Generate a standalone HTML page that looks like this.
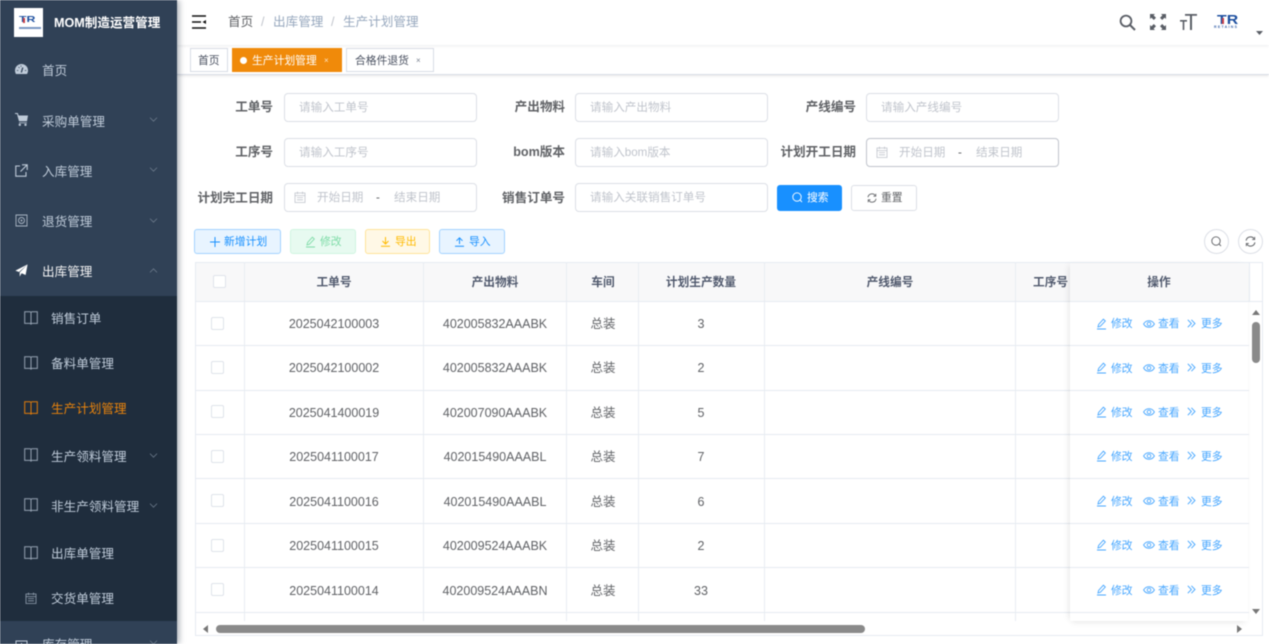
<!DOCTYPE html>
<html lang="zh-CN"><head><meta charset="utf-8"><title>生产计划管理</title>
<style>
*{box-sizing:border-box}
html,body{margin:0;padding:0;width:1269px;height:644px;overflow:hidden;background:#fff}
body{font-family:"Liberation Sans","Noto Sans CJK SC",sans-serif;color:#606266}
#root{position:relative;width:1269px;height:644px;overflow:hidden;filter:blur(.4px)}
#root div,#root span.a,#root svg.a{position:absolute}
.t{white-space:nowrap;line-height:16px;height:16px}
.c{transform:translateX(-50%);text-align:center}
.r{text-align:right}
#side{left:0;top:0;width:177px;height:644px;background:#304156;box-shadow:2px 0 6px rgba(0,21,41,.35);z-index:5;overflow:hidden}
.m{color:#bfcbd9;font-size:12.6px;left:42px}
.s{color:#bfcbd9;font-size:12.6px;left:51px}
.lab{font-size:12.6px;font-weight:700;color:#606266;width:100px;text-align:right}
.inp{height:29px;width:193px;border:1px solid #dcdfe6;border-radius:4px;background:#fff}
.ph{font-size:11.6px;color:#c0c4cc;left:14px;top:6px}
.btn{height:25px;top:229px;border:1px solid;border-radius:3px;font-size:10.8px}
.btn span{position:absolute;top:4px;white-space:nowrap;line-height:16px}
.th{font-size:11.7px;font-weight:700;color:#515a6e;top:275px}
.td{font-size:12.5px;color:#606266}
.hl{height:1px;background:#e6ebf2;left:195px;width:1054px}
.vl{width:1px;background:#e8edf3;top:262px;height:359px}
.op{color:#46a6ff;font-size:10.8px}
.cb{width:13px;height:13px;border:1px solid #dfe3ea;border-radius:2px;background:#fff;left:211px}
.ch{left:149px;color:#6f7d8e}
svg{display:block;overflow:visible}
</style></head><body>
<svg width="0" height="0" style="position:absolute"><defs>
<symbol id="book" viewBox="0 0 14 14"><path d="M.7 .8h5.500l.8.7.8-.7h5.500v11.600H7.800l-.8.8-.8-.8H.7zM7 1.500v11.700" fill="none" stroke="currentColor" stroke-width="1"/></symbol>
<symbol id="chev" viewBox="0 0 10 6"><path d="M.8 .8 5 5 9.200 .8" fill="none" stroke="currentColor" stroke-width=".9"/></symbol>
<symbol id="chevu" viewBox="0 0 10 6"><path d="M.8 5.200 5 1l4.200 4.200" fill="none" stroke="currentColor" stroke-width=".9"/></symbol>
<symbol id="pen" viewBox="0 0 11 12"><path d="M2 9 2.600 6.500 7.400 1.200 9.300 3 4.400 8.200zM1 11h9" fill="none" stroke="currentColor" stroke-width=".9"/></symbol>
<symbol id="eye" viewBox="0 0 12 8"><path d="M.6 4C2 1.600 4 .7 6 .7S10 1.600 11.400 4C10 6.400 8 7.300 6 7.300S2 6.400 .6 4z" fill="none" stroke="currentColor" stroke-width=".9"/><circle cx="6" cy="4" r="1.800" fill="none" stroke="currentColor" stroke-width=".9"/></symbol>
<symbol id="dbl" viewBox="0 0 9 9"><path d="M.8 .8 4.400 4.500.8 8.200M4.400 .8 8 4.500 4.400 8.200" fill="none" stroke="currentColor" stroke-width=".9"/></symbol>
<symbol id="cal" viewBox="0 0 12 12"><path d="M1 2h10v9.500H1zM1 4.600h10M3.500 .6V3M8.500 .6V3M3 6.600h6M3 8.800h6" fill="none" stroke="currentColor" stroke-width=".8"/></symbol>
<symbol id="ref" viewBox="0 0 10 10"><path d="M1 4.200A4 4 0 0 1 8.300 2.600M9 5.800A4 4 0 0 1 1.700 7.400" fill="none" stroke="currentColor" stroke-width=".9"/><path d="M8.800 .8v2.400H6.500M1.200 9.200V6.800h2.300" fill="none" stroke="currentColor" stroke-width=".8"/></symbol>
<symbol id="srch" viewBox="0 0 11 11"><circle cx="5" cy="5" r="4.200" fill="none" stroke="currentColor" stroke-width=".9"/><path d="M8 8l2 2" stroke="currentColor" stroke-width=".9"/></symbol>
</defs></svg>
<div id="root">

<div id="side">
<div style="left:14px;top:8px;width:29px;height:29px;background:#fff"></div>
<div class="t" style="left:19px;top:14px;width:12px;height:10px;font:700 8.500px/10px 'Liberation Sans',sans-serif;color:#1d4f9f;transform-origin:0 50%;transform:scaleX(1.450)">TR</div>
<div style="left:23px;top:18px;width:2px;height:5px;background:#c9414a"></div>
<div style="left:19px;top:27px;width:22px;height:2px;background:#7a97c4"></div>
<div class="t" style="left:54px;top:15px;font-size:12.6px;font-weight:700;color:#fff">MOM制造运营管理</div>

<svg class="a" style="left:15px;top:64px" width="13" height="10" viewBox="0 0 13 10"><path d="M6.500 0A6.500 6.500 0 0 0 0 6.500C0 7.800.4 9 1 10h11c.6-1 1-2.200 1-3.500A6.500 6.500 0 0 0 6.500 0z" fill="#bfcbd9"/><path d="M6.300 8.500 7.800 3.500" stroke="#304156" stroke-width="1.300"/><path d="M1.800 6.500h1.500M9.800 6.500h1.500M3.500 3l1 1M6 1.500v1.200" stroke="#304156" stroke-width=".8"/></svg>
<div class="t m" style="top:63px">首页</div>

<svg class="a" style="left:15px;top:113px" width="13" height="13" viewBox="0 0 13 13"><path d="M0 .5h2.400l1 3" fill="none" stroke="#bfcbd9" stroke-width="1.100"/><path d="M2.400 2.500H13l-1 5.800H4z" fill="#bfcbd9"/><path d="M4 9.800h8" stroke="#bfcbd9" stroke-width=".8"/><circle cx="4.800" cy="11.800" r="1.200" fill="#bfcbd9"/><circle cx="10.500" cy="11.800" r="1.200" fill="#bfcbd9"/></svg>
<div class="t m" style="top:114px">采购单管理</div>
<svg class="a ch" style="top:117px" width="9" height="5"><use href="#chev"/></svg>

<svg class="a" style="left:15px;top:164px" width="13" height="13" viewBox="0 0 13 13"><path d="M5 2H.8v10.200H11V8M7 .8h5.200V6M12 1 5.500 7.500" fill="none" stroke="#bfcbd9" stroke-width="1.100"/></svg>
<div class="t m" style="top:164px">入库管理</div>
<svg class="a ch" style="top:167px" width="9" height="5"><use href="#chev"/></svg>

<svg class="a" style="left:15px;top:214px" width="13" height="13" viewBox="0 0 13 13"><path d="M1 1h11v11H1z" fill="none" stroke="#a8b4c2" stroke-width=".9"/><circle cx="6.500" cy="6.500" r="3" fill="none" stroke="#a8b4c2" stroke-width=".9"/><circle cx="6.500" cy="6.500" r="1" fill="#a8b4c2"/></svg>
<div class="t m" style="top:214px">退货管理</div>
<svg class="a ch" style="top:218px" width="9" height="5"><use href="#chev"/></svg>

<svg class="a" style="left:15px;top:264px" width="13" height="13" viewBox="0 0 13 13"><path d="M12.600 .4 10.600 11 6.600 9.200 4.700 12.600V8.400zM.4 6.600 12.600 .4 4 8z" fill="#fff"/></svg>
<div class="t m" style="top:264px;color:#f4f4f5">出库管理</div>
<svg class="a ch" style="top:268px" width="9" height="5"><use href="#chevu"/></svg>

<div style="left:0;top:296px;width:177px;height:325px;background:#1f2d3d"></div>
<svg class="a" style="left:24px;top:311px;color:#95a2b2" width="14" height="14"><use href="#book"/></svg>
<div class="t s" style="top:311px">销售订单</div>
<svg class="a" style="left:24px;top:356px;color:#95a2b2" width="14" height="14"><use href="#book"/></svg>
<div class="t s" style="top:356px">备料单管理</div>
<svg class="a" style="left:24px;top:401px;color:#e07c0c" width="14" height="14"><use href="#book"/></svg>
<div class="t s" style="top:401px;color:#e8830c">生产计划管理</div>
<svg class="a" style="left:24px;top:448px;color:#95a2b2" width="14" height="14"><use href="#book"/></svg>
<div class="t s" style="top:449px">生产领料管理</div>
<svg class="a ch" style="top:453px" width="9" height="5"><use href="#chev"/></svg>
<svg class="a" style="left:24px;top:498px;color:#95a2b2" width="14" height="14"><use href="#book"/></svg>
<div class="t s" style="top:499px">非生产领料管理</div>
<svg class="a ch" style="top:503px" width="9" height="5"><use href="#chev"/></svg>
<svg class="a" style="left:24px;top:546px;color:#95a2b2" width="14" height="14"><use href="#book"/></svg>
<div class="t s" style="top:546px">出库单管理</div>
<svg class="a" style="left:25px;top:592px;color:#95a2b2" width="12" height="12"><use href="#cal"/></svg>
<div class="t s" style="top:591px">交货单管理</div>
<svg class="a" style="left:15px;top:640px" width="13" height="13" viewBox="0 0 13 13"><path d="M1 1h11v11H1zM6.500 3v5" fill="none" stroke="#bfcbd9"/></svg>
<div class="t m" style="top:637px">库存管理</div>
<svg class="a ch" style="top:640px" width="9" height="5"><use href="#chev"/></svg>
</div>

<!-- top bar -->
<div style="left:177px;top:0;width:1092px;height:45px;background:#fff;box-shadow:0 1px 3px rgba(0,21,41,.08);z-index:2"></div>
<svg class="a" style="left:192px;top:15px;z-index:3" width="14" height="14" viewBox="0 0 14 14"><path d="M0 1h14M0 7h9M0 13h14" stroke="#111" stroke-width="1.400"/><path d="M14 5v4L10.500 7z" fill="#111"/></svg>
<div class="t" style="left:228px;top:14px;font-size:12.6px;color:#606266;z-index:3">首页</div>
<div class="t" style="left:261px;top:14px;font-size:12.6px;color:#c0c4cc;z-index:3">/</div>
<div class="t" style="left:273px;top:14px;font-size:12.6px;color:#97a8be;z-index:3">出库管理</div>
<div class="t" style="left:331px;top:14px;font-size:12.6px;color:#c0c4cc;z-index:3">/</div>
<div class="t" style="left:343px;top:14px;font-size:12.6px;color:#97a8be;z-index:3">生产计划管理</div>
<svg class="a" style="left:1119px;top:14px;z-index:3" width="17" height="17" viewBox="0 0 17 17"><circle cx="7" cy="7" r="5.400" fill="none" stroke="#5a5e66" stroke-width="1.800"/><path d="M11 11l5 5" stroke="#5a5e66" stroke-width="2"/></svg>
<svg class="a" style="left:1150px;top:14px;z-index:3" width="16" height="16" viewBox="0 0 16 16"><g fill="#5a5e66"><path d="M0 0h5L3.600 1.400 6 3.800 3.800 6 1.400 3.600 0 5zM16 0v5L14.600 3.600 12.200 6 10 3.800 12.400 1.400 11 0zM0 16v-5l1.400 1.400L3.800 10 6 12.200 3.600 14.600 5 16zM16 16h-5l1.400-1.400L10 12.200 12.200 10 14.600 12.400 16 11z"/></g></svg>
<svg class="a" style="left:1180px;top:14px;z-index:3" width="17" height="16" viewBox="0 0 17 16"><path d="M5 0h12v1.800h-5V16h-2V1.800H5zM0 6h7v1.600H4.300V16H2.700V7.600H0z" fill="#5a5e66"/></svg>
<div class="t" style="left:1217px;top:14px;width:18px;height:11px;font:700 13px/11px 'Liberation Sans',sans-serif;color:#1d4f9f;z-index:3;transform-origin:0 50%;transform:scaleX(1.220)">TR</div>
<div style="left:1222px;top:18px;width:2px;height:6px;background:#c9414a;z-index:3"></div>
<div class="t" style="left:1214px;top:26px;width:30px;height:3px;font:700 3.500px/3px 'Liberation Sans',sans-serif;color:#3f68ad;letter-spacing:1.300px;z-index:3">RETAINS</div>
<svg class="a" style="left:1256px;top:31px;z-index:3" width="7" height="4"><path d="M0 0h7L3.500 4z" fill="#5a5e66"/></svg>

<!-- tabs -->
<div style="left:177px;top:45px;width:1092px;height:30px;background:#fff;border-bottom:1px solid #d8dce5;box-shadow:0 1px 3px rgba(0,0,0,.1)"></div>
<div style="left:190px;top:48px;width:38px;height:24px;border:1px solid #d8dce5;background:#fff"></div>
<div class="t" style="left:198px;top:53px;font-size:10.8px;color:#495060">首页</div>
<div style="left:232px;top:48px;width:110px;height:24px;background:#f08a0a"></div>
<div style="left:240px;top:57px;width:7px;height:7px;border-radius:50%;background:#fff"></div>
<div class="t" style="left:252px;top:53px;font-size:10.8px;color:#fff">生产计划管理</div>
<div class="t" style="left:324px;top:53px;font-size:8px;color:#fde2c0">×</div>
<div style="left:346px;top:48px;width:88px;height:24px;border:1px solid #d8dce5;background:#fff"></div>
<div class="t" style="left:355px;top:53px;font-size:10.8px;color:#495060">合格件退货</div>
<div class="t" style="left:416px;top:53px;font-size:8px;color:#7a8290">×</div>

<!-- form -->
<div class="t lab" style="left:173px;top:99px">工单号</div>
<div class="inp" style="left:284px;top:93px"><span class="a t ph">请输入工单号</span></div>
<div class="t lab" style="left:465px;top:99px">产出物料</div>
<div class="inp" style="left:575px;top:93px"><span class="a t ph">请输入产出物料</span></div>
<div class="t lab" style="left:756px;top:99px">产线编号</div>
<div class="inp" style="left:866px;top:93px"><span class="a t ph">请输入产线编号</span></div>

<div class="t lab" style="left:173px;top:144px">工序号</div>
<div class="inp" style="left:284px;top:138px"><span class="a t ph">请输入工序号</span></div>
<div class="t lab" style="left:465px;top:144px">bom版本</div>
<div class="inp" style="left:575px;top:138px"><span class="a t ph">请输入bom版本</span></div>
<div class="t lab" style="left:756px;top:144px">计划开工日期</div>
<div class="inp" style="left:866px;top:138px;border-color:#c0c4cc"><svg class="a" style="left:9px;top:7px;color:#c0c4cc" width="12" height="12"><use href="#cal"/></svg><span class="a t ph" style="left:32px">开始日期</span><span class="a t ph" style="left:91px;color:#606266">-</span><span class="a t ph" style="left:109px">结束日期</span></div>

<div class="t lab" style="left:173px;top:190px">计划完工日期</div>
<div class="inp" style="left:284px;top:183px"><svg class="a" style="left:9px;top:7px;color:#c0c4cc" width="12" height="12"><use href="#cal"/></svg><span class="a t ph" style="left:32px">开始日期</span><span class="a t ph" style="left:91px;color:#606266">-</span><span class="a t ph" style="left:109px">结束日期</span></div>
<div class="t lab" style="left:465px;top:190px">销售订单号</div>
<div class="inp" style="left:575px;top:183px"><span class="a t ph">请输入关联销售订单号</span></div>
<div style="left:777px;top:185px;width:65px;height:26px;background:#1890ff;border-radius:3px"></div>
<svg class="a" style="left:792px;top:192px;color:#fff" width="11" height="11"><use href="#srch"/></svg>
<div class="t" style="left:807px;top:190px;font-size:10.8px;color:#fff">搜索</div>
<div style="left:851px;top:185px;width:66px;height:26px;border:1px solid #dcdfe6;border-radius:3px;background:#fff"></div>
<svg class="a" style="left:867px;top:193px;color:#606266" width="10" height="10"><use href="#ref"/></svg>
<div class="t" style="left:881px;top:190px;font-size:10.8px;color:#606266">重置</div>

<!-- toolbar -->
<div class="btn" style="left:194px;width:87px;background:#e8f4ff;border-color:#a3d3ff;color:#1890ff"><svg class="a" style="left:15px;top:7px" width="10" height="10" viewBox="0 0 10 10"><path d="M5 0v10M0 5h10" stroke="#1890ff" stroke-width="1"/></svg><span style="left:29px">新增计划</span></div>
<div class="btn" style="left:290px;width:66px;background:#e7faf0;border-color:#d0f5e0;color:#7fdca8"><svg class="a" style="left:14px;top:6px;color:#7fdca8" width="11" height="12"><use href="#pen"/></svg><span style="left:29px">修改</span></div>
<div class="btn" style="left:365px;width:65px;background:#fff8e6;border-color:#ffe399;color:#ffba00"><svg class="a" style="left:15px;top:7px" width="9" height="10" viewBox="0 0 9 10"><path d="M4.500 0v6.500M1.500 4l3 3 3-3M0 9.300h9" fill="none" stroke="#ffba00" stroke-width="1"/></svg><span style="left:29px">导出</span></div>
<div class="btn" style="left:439px;width:66px;background:#e8f4ff;border-color:#a3d3ff;color:#1890ff"><svg class="a" style="left:15px;top:7px" width="9" height="10" viewBox="0 0 9 10"><path d="M4.500 7V.8M1.500 3.800l3-3 3 3M0 9.300h9" fill="none" stroke="#1890ff" stroke-width="1"/></svg><span style="left:29px">导入</span></div>
<div style="left:1204px;top:229px;width:25px;height:25px;border:1px solid #dcdfe6;border-radius:50%;background:#fff"></div>
<svg class="a" style="left:1211px;top:236px;color:#606266" width="11" height="11"><use href="#srch"/></svg>
<div style="left:1238px;top:229px;width:25px;height:25px;border:1px solid #dcdfe6;border-radius:50%;background:#fff"></div>
<svg class="a" style="left:1245px;top:236px;color:#606266" width="11" height="11"><use href="#ref"/></svg>

<!-- table -->
<div style="left:195px;top:262px;width:1068px;height:374px;border:1px solid #e6ebf2;background:#fff"></div>
<div style="left:196px;top:263px;width:1053px;height:38px;background:#f8f8f9"></div>
<div class="vl" style="left:244px"></div><div class="vl" style="left:423px"></div><div class="vl" style="left:566px"></div><div class="vl" style="left:638px"></div><div class="vl" style="left:764px"></div><div class="vl" style="left:1015px"></div>
<div class="hl" style="top:301px;width:1068px"></div>
<div class="hl" style="top:345px"></div><div class="hl" style="top:390px"></div><div class="hl" style="top:434px"></div><div class="hl" style="top:478px"></div><div class="hl" style="top:523px"></div><div class="hl" style="top:567px"></div><div class="hl" style="top:612px"></div>
<div class="cb" style="left:213px;top:275px"></div>
<div class="t th c" style="left:334px">工单号</div>
<div class="t th c" style="left:495px">产出物料</div>
<div class="t th c" style="left:603px">车间</div>
<div class="t th c" style="left:701px">计划生产数量</div>
<div class="t th c" style="left:890px">产线编号</div>
<div class="t th" style="left:1033px">工序号</div>

<div class="cb" style="top:317px"></div><div class="t td c" style="left:334px;top:316px">2025042100003</div><div class="t td c" style="left:495px;top:316px">402005832AAABK</div><div class="t td c" style="left:603px;top:316px">总装</div><div class="t td c" style="left:701px;top:316px">3</div>
<div class="cb" style="top:361px"></div><div class="t td c" style="left:334px;top:360px">2025042100002</div><div class="t td c" style="left:495px;top:360px">402005832AAABK</div><div class="t td c" style="left:603px;top:360px">总装</div><div class="t td c" style="left:701px;top:360px">2</div>
<div class="cb" style="top:405px"></div><div class="t td c" style="left:334px;top:405px">2025041400019</div><div class="t td c" style="left:495px;top:405px">402007090AAABK</div><div class="t td c" style="left:603px;top:405px">总装</div><div class="t td c" style="left:701px;top:405px">5</div>
<div class="cb" style="top:450px"></div><div class="t td c" style="left:334px;top:449px">2025041100017</div><div class="t td c" style="left:495px;top:449px">402015490AAABL</div><div class="t td c" style="left:603px;top:449px">总装</div><div class="t td c" style="left:701px;top:449px">7</div>
<div class="cb" style="top:494px"></div><div class="t td c" style="left:334px;top:494px">2025041100016</div><div class="t td c" style="left:495px;top:494px">402015490AAABL</div><div class="t td c" style="left:603px;top:494px">总装</div><div class="t td c" style="left:701px;top:494px">6</div>
<div class="cb" style="top:539px"></div><div class="t td c" style="left:334px;top:538px">2025041100015</div><div class="t td c" style="left:495px;top:538px">402009524AAABK</div><div class="t td c" style="left:603px;top:538px">总装</div><div class="t td c" style="left:701px;top:538px">2</div>
<div class="cb" style="top:583px"></div><div class="t td c" style="left:334px;top:583px">2025041100014</div><div class="t td c" style="left:495px;top:583px">402009524AAABN</div><div class="t td c" style="left:603px;top:583px">总装</div><div class="t td c" style="left:701px;top:583px">33</div>

<!-- fixed column -->
<div style="left:1070px;top:263px;width:178px;height:358px;background:#fff;box-shadow:-4px 0 6px -2px rgba(0,0,0,.07),0 4px 6px -2px rgba(0,0,0,.07)"></div>
<div style="left:1070px;top:263px;width:178px;height:38px;background:#f8f8f9"></div>
<div class="t th c" style="left:1159px">操作</div>
<div class="hl" style="top:301px;left:1070px;width:178px"></div>
<div class="hl" style="top:345px;left:1070px;width:178px"></div><div class="hl" style="top:390px;left:1070px;width:178px"></div><div class="hl" style="top:434px;left:1070px;width:178px"></div><div class="hl" style="top:478px;left:1070px;width:178px"></div><div class="hl" style="top:523px;left:1070px;width:178px"></div><div class="hl" style="top:567px;left:1070px;width:178px"></div><div class="hl" style="top:612px;left:1070px;width:178px"></div>

<div style="left:1096px;top:317px;width:130px;height:14px"><svg class="a op" style="left:0;top:1px" width="11" height="12"><use href="#pen"/></svg><span class="a t op" style="left:15px;top:-1px">修改</span><svg class="a op" style="left:47px;top:3px" width="12" height="8"><use href="#eye"/></svg><span class="a t op" style="left:62px;top:-1px">查看</span><svg class="a op" style="left:91px;top:2px" width="9" height="9"><use href="#dbl"/></svg><span class="a t op" style="left:105px;top:-1px">更多</span></div>
<div style="left:1096px;top:362px;width:130px;height:14px"><svg class="a op" style="left:0;top:0" width="11" height="12"><use href="#pen"/></svg><span class="a t op" style="left:15px;top:-1px">修改</span><svg class="a op" style="left:47px;top:2px" width="12" height="8"><use href="#eye"/></svg><span class="a t op" style="left:62px;top:-1px">查看</span><svg class="a op" style="left:91px;top:1px" width="9" height="9"><use href="#dbl"/></svg><span class="a t op" style="left:105px;top:-1px">更多</span></div>
<div style="left:1096px;top:406px;width:130px;height:14px"><svg class="a op" style="left:0;top:0" width="11" height="12"><use href="#pen"/></svg><span class="a t op" style="left:15px;top:-1px">修改</span><svg class="a op" style="left:47px;top:2px" width="12" height="8"><use href="#eye"/></svg><span class="a t op" style="left:62px;top:-1px">查看</span><svg class="a op" style="left:91px;top:1px" width="9" height="9"><use href="#dbl"/></svg><span class="a t op" style="left:105px;top:-1px">更多</span></div>
<div style="left:1096px;top:450px;width:130px;height:14px"><svg class="a op" style="left:0;top:0" width="11" height="12"><use href="#pen"/></svg><span class="a t op" style="left:15px;top:-1px">修改</span><svg class="a op" style="left:47px;top:2px" width="12" height="8"><use href="#eye"/></svg><span class="a t op" style="left:62px;top:-1px">查看</span><svg class="a op" style="left:91px;top:1px" width="9" height="9"><use href="#dbl"/></svg><span class="a t op" style="left:105px;top:-1px">更多</span></div>
<div style="left:1096px;top:495px;width:130px;height:14px"><svg class="a op" style="left:0;top:0" width="11" height="12"><use href="#pen"/></svg><span class="a t op" style="left:15px;top:-1px">修改</span><svg class="a op" style="left:47px;top:2px" width="12" height="8"><use href="#eye"/></svg><span class="a t op" style="left:62px;top:-1px">查看</span><svg class="a op" style="left:91px;top:1px" width="9" height="9"><use href="#dbl"/></svg><span class="a t op" style="left:105px;top:-1px">更多</span></div>
<div style="left:1096px;top:539px;width:130px;height:14px"><svg class="a op" style="left:0;top:0" width="11" height="12"><use href="#pen"/></svg><span class="a t op" style="left:15px;top:-1px">修改</span><svg class="a op" style="left:47px;top:2px" width="12" height="8"><use href="#eye"/></svg><span class="a t op" style="left:62px;top:-1px">查看</span><svg class="a op" style="left:91px;top:1px" width="9" height="9"><use href="#dbl"/></svg><span class="a t op" style="left:105px;top:-1px">更多</span></div>
<div style="left:1096px;top:584px;width:130px;height:14px"><svg class="a op" style="left:0;top:0" width="11" height="12"><use href="#pen"/></svg><span class="a t op" style="left:15px;top:-1px">修改</span><svg class="a op" style="left:47px;top:2px" width="12" height="8"><use href="#eye"/></svg><span class="a t op" style="left:62px;top:-1px">查看</span><svg class="a op" style="left:91px;top:1px" width="9" height="9"><use href="#dbl"/></svg><span class="a t op" style="left:105px;top:-1px">更多</span></div>

<!-- scrollbars -->
<div style="left:1249px;top:263px;width:1px;height:39px;background:#e6ebf2"></div>
<div style="left:1252px;top:322px;width:8px;height:41px;border-radius:4px;background:#8a8a8a"></div>
<svg class="a" style="left:1252px;top:310px" width="8" height="5"><path d="M0 5h8L4 0z" fill="#777"/></svg>
<svg class="a" style="left:1252px;top:609px" width="8" height="5"><path d="M0 0h8L4 5z" fill="#777"/></svg>
<div style="left:216px;top:625px;width:649px;height:8px;border-radius:4px;background:#8a8a8a"></div>
<svg class="a" style="left:203px;top:625px" width="5" height="8"><path d="M5 0v8L0 4z" fill="#777"/></svg>
<svg class="a" style="left:1237px;top:625px" width="5" height="8"><path d="M0 0v8l5-4z" fill="#777"/></svg>
</div>
</body></html>
